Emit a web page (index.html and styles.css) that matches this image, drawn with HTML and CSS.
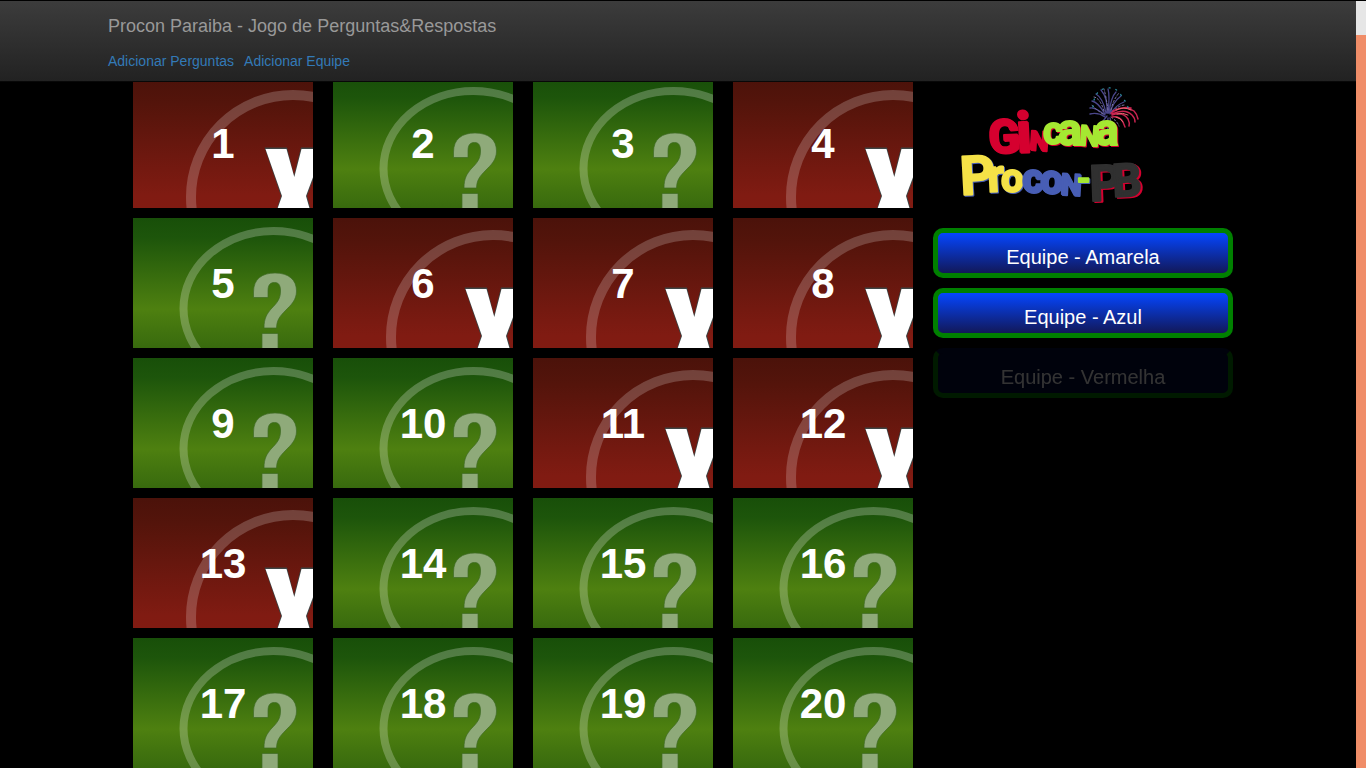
FILE: index.html
```html
<!DOCTYPE html>
<html lang="pt-BR">
<head>
<meta charset="utf-8">
<meta name="viewport" content="width=device-width, initial-scale=1">
<title>Procon Paraiba - Jogo de Perguntas&amp;Respostas</title>
<link rel="stylesheet" href="styles.css">
</head>
<body>
<svg class="defs" aria-hidden="true">
  <defs>
    <linearGradient id="green" x1="0" y1="0" x2="0" y2="1">
      <stop offset="0" stop-color="#184f09"/><stop offset=".15" stop-color="#1d550b"/>
      <stop offset=".7" stop-color="#4e8010"/><stop offset="1" stop-color="#386a0e"/>
    </linearGradient>
    <linearGradient id="red" x1="0" y1="0" x2="0" y2="1">
      <stop offset="0" stop-color="#4b120a"/><stop offset=".2" stop-color="#54140b"/>
      <stop offset=".9" stop-color="#801b12"/><stop offset="1" stop-color="#811b12"/>
    </linearGradient>
    <filter id="soft"><feGaussianBlur stdDeviation=".7"/></filter>
  </defs>
  <symbol id="open" viewBox="0 0 180 130">
    <rect width="180" height="130" fill="url(#green)"/>
    <ellipse cx="140.500" cy="90.500" rx="90" ry="77.500" fill="none" stroke="#fff" stroke-opacity=".24" stroke-width="8"/>
    <g fill="#8faa7a" stroke="#3f6b25" stroke-opacity=".7">
      <path d="M120.500 79.500V74C120.500 61 129 55 142 55C156 55 163.500 62 163.500 73C163.500 82 158 87 153 92C146 99 144 102 143.500 110H131C131 100 134 96 138 91C144 85 147.500 81 147.500 73C147.500 67 145.500 64.500 141.500 64.500C137 64.500 135 67 135 73V79.500Z"/>
      <path d="M129 115.500H145V132H129Z"/>
    </g>
  </symbol>
  <symbol id="closed" viewBox="0 0 180 130">
    <rect width="180" height="130" fill="url(#red)"/>
    <circle cx="160" cy="119" r="102" fill="none" stroke="#fff" stroke-opacity=".2" stroke-width="10"/>
    <path d="M131.500 69.500H154L161 97L168 69.500H182V97L174 118L178 132H143.500L148 118Z" fill="#3c4444" filter="url(#soft)"/>
    <path d="M132.500 71H153.500L161.300 99L168.500 71H182V94L173 118L177 132H144L149 118Z" fill="#fff"/>
  </symbol>
</svg>

<header class="navbar">
  <div class="container">
    <a class="brand" href="#">Procon Paraiba - Jogo de Perguntas&amp;Respostas</a>
    <nav class="links">
      <a href="#perguntas">Adicionar Perguntas</a>
      <a href="#equipe">Adicionar Equipe</a>
    </nav>
  </div>
</header>

<main class="container game">
  <section class="board" aria-label="Perguntas">
    <button class="tile"><svg><use href="#closed"/></svg><span>1</span></button>
    <button class="tile"><svg><use href="#open"/></svg><span>2</span></button>
    <button class="tile"><svg><use href="#open"/></svg><span>3</span></button>
    <button class="tile"><svg><use href="#closed"/></svg><span>4</span></button>
    <button class="tile"><svg><use href="#open"/></svg><span>5</span></button>
    <button class="tile"><svg><use href="#closed"/></svg><span>6</span></button>
    <button class="tile"><svg><use href="#closed"/></svg><span>7</span></button>
    <button class="tile"><svg><use href="#closed"/></svg><span>8</span></button>
    <button class="tile"><svg><use href="#open"/></svg><span>9</span></button>
    <button class="tile"><svg><use href="#open"/></svg><span>10</span></button>
    <button class="tile"><svg><use href="#closed"/></svg><span>11</span></button>
    <button class="tile"><svg><use href="#closed"/></svg><span>12</span></button>
    <button class="tile"><svg><use href="#closed"/></svg><span>13</span></button>
    <button class="tile"><svg><use href="#open"/></svg><span>14</span></button>
    <button class="tile"><svg><use href="#open"/></svg><span>15</span></button>
    <button class="tile"><svg><use href="#open"/></svg><span>16</span></button>
    <button class="tile"><svg><use href="#open"/></svg><span>17</span></button>
    <button class="tile"><svg><use href="#open"/></svg><span>18</span></button>
    <button class="tile"><svg><use href="#open"/></svg><span>19</span></button>
    <button class="tile"><svg><use href="#open"/></svg><span>20</span></button>
  </section>

  <aside class="side">
    <svg class="logo" viewBox="0 -2 200 140" role="img" aria-label="Gincana Procon-PB">
      <g fill="none" stroke-linecap="round">
        <path stroke="#4b478c" stroke-width="1.300" d="M155 34Q148 22 142 21M156 33Q153 18 146 14M157 33Q158 18 151 10M158 33Q160 16 158 9M159 33Q161 17 166 12M160 33Q163 22 171 16M160 34Q166 25 174 22M155 35Q145 27 140 28M155 37Q148 32 140 34M157 36Q153 40 150 47M158 38Q157 44 158 50M160 38Q161 44 165 48"/>
        <path stroke="#7f78a6" stroke-width="1" stroke-dasharray="2 2" d="M154 31Q150 18 144 17M158 30Q156 16 154 9M161 30Q163 20 169 13M153 34Q145 29 141 24M162 32Q169 25 175 25M161 37Q167 41 169 46"/>
        <path stroke="#c92350" stroke-width="1.500" d="M161 33Q174 24 184 31Q187 34 188 39M162 34Q175 28 182 35Q185 38 185 42M162 35Q173 31 178 39Q180 43 179 46M162 37Q170 36 173 42L175 47M163 31Q172 26 181 28"/>
        <path stroke="#e56a72" stroke-width="1" d="M166 30Q174 26 181 30M167 34Q173 32 178 35M166 37Q171 38 173 42"/>
        <path stroke="#2a8a9d" stroke-width="1.300" stroke-dasharray="1 6" d="M143 27Q144 12 153 9Q165 5 171 15L177 24L179 31"/>
      </g>
      <text class="letters">
        <tspan class="crimson" x="39" y="73" font-size="46" rotate="-3">G</tspan><tspan class="crimson" x="67" y="72" font-size="56" rotate="-3">i</tspan><tspan class="crimson" x="79" y="69" font-size="26" rotate="4">N</tspan><tspan class="lime" x="93" y="64" font-size="38">c</tspan><tspan class="lime" x="108" y="65" font-size="44">a</tspan><tspan class="lime" x="129" y="65" font-size="28" rotate="4">N</tspan><tspan class="lime" x="145" y="65" font-size="44">a</tspan>
      </text>
      <text class="letters blue-edge">
        <tspan class="yellow" x="11" y="115" font-size="54" rotate="-3">P</tspan><tspan class="yellow" x="38" y="112" font-size="46" rotate="-3">r</tspan><tspan class="yellow" x="51" y="112" font-size="40">o</tspan><tspan class="blue" x="72" y="112" font-size="40">c</tspan><tspan class="blue" x="90" y="113" font-size="40">o</tspan><tspan class="blue" x="110" y="114" font-size="29" rotate="3">N</tspan><tspan class="lime" x="127" y="110" font-size="34">-</tspan>
      </text>
      <text class="letters red-edge">
        <tspan class="ink" x="140" y="121" font-size="50" rotate="-2">P</tspan><tspan class="ink" x="163" y="117" font-size="46" rotate="-3">B</tspan>
      </text>
    </svg>
    <button class="team">Equipe - Amarela</button>
    <button class="team">Equipe - Azul</button>
    <button class="team out">Equipe - Vermelha</button>
  </aside>
</main>
<div class="scroll" aria-hidden="true"><div class="thumb"></div></div>
</body>
</html>
```

FILE: styles.css
```css
* { box-sizing: border-box; }
html { height: 100%; background: #000; }
body {
  height: 100%;
  margin: 0;
  padding: 78px 10px 0 0;
  overflow: hidden;
  background: #000;
  color: #fff;
  font: 14px/20px "Liberation Sans", Arial, sans-serif;
}
a { text-decoration: none; }
button { margin: 0; padding: 0; border: 0; color: #fff; font-family: inherit; cursor: pointer; }
.defs { position: absolute; width: 0; height: 0; }
.container { max-width: 1140px; margin: 0 auto; }
.navbar {
  position: fixed;
  z-index: 2;
  top: 0;
  left: 0;
  right: 10px;
  padding: 15px 0 10px;
  border-top: 1px solid #000;
  border-bottom: 1px solid #080808;
  background: linear-gradient(#3c3c3c, #222) padding-box;
}
.brand { display: block; color: #999; font-size: 18px; }
.links { display: flex; gap: 10px; margin-top: 15px; }
.links a { color: #337ab7; }
.game { display: flex; align-items: flex-start; gap: 20px; padding-left: 25px; }
.board { display: grid; grid-template-columns: repeat(4, 180px); gap: 10px 20px; }
.tile { display: grid; height: 130px; background: none; overflow: hidden; }
.tile > * { grid-area: 1 / 1; }
.tile svg { width: 180px; height: 130px; }
.tile span { align-self: center; padding-top: 2px; font-size: 42px; line-height: 46px; font-weight: bold; }
.side { display: flex; flex-direction: column; gap: 10px; flex: 0 1 300px; }
.logo { width: 200px; height: 140px; margin-left: 17px; }
.letters {
  font-family: Roboto, sans-serif;
  font-weight: bold;
  stroke-width: 2px;
  stroke-linejoin: round;
  filter: drop-shadow(1px 1px 0 #d5002f);
}
.blue-edge { filter: drop-shadow(1px 1px 0 #485eb5); }
.red-edge { filter: drop-shadow(2px 1px 0 #d5002f); }
.crimson { fill: #d5002f; stroke: #d5002f; }
.lime { fill: #a5e832; stroke: #a5e832; }
.yellow { fill: #f5e247; stroke: #f5e247; }
.blue { fill: #485eb5; stroke: #485eb5; }
.ink { fill: #303030; stroke: #303030; }
.team {
  height: 50px;
  padding-top: 8px;
  border: 5px solid green;
  border-radius: 10px;
  background: linear-gradient(#0546ff, #121859);
  font-size: 20px;
  line-height: 28px;
}
.out { opacity: .2; border-top-color: #000a3c; background: #000a3c; }
.scroll { position: fixed; z-index: 3; top: 1px; right: 0; bottom: 0; width: 10px; background: #f08d68; }
.thumb { height: 34px; background: #e6e6e6; }
```
